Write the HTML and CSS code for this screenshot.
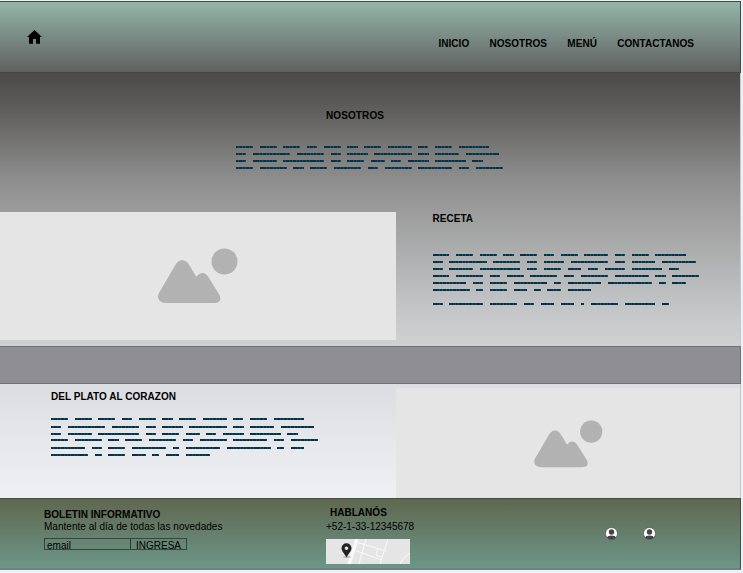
FILE: index.html
```html
<!DOCTYPE html>
<html lang="es">
<head>
<meta charset="utf-8">
<title>Nosotros</title>
<link rel="stylesheet" href="styles.css">
</head>
<body>
<div class="page">
  <header class="header">
    <svg class="home" viewBox="0 0 15 14"><path d="M7.5 0 15 7H13V13.7H9V9H6V13.7H2V7H0Z"/></svg>
    <nav class="nav"><a>INICIO</a><a>NOSOTROS</a><a>MENÚ</a><a>CONTACTANOS</a></nav>
  </header>
  <main class="main">
    <section class="about">
      <h2 class="title">NOSOTROS</h2>
      <div class="copy" data-lines="4"></div>
    </section>
    <section class="recipe">
      <div class="photo photo-left">
        <svg class="picture" viewBox="0 0 80 56"><path d="M1 45 17 17.500C20.500 10.500 28 10.500 31.500 17.500L38.300 28.800C42 24 46.500 23.500 50 28.500L61.500 47Q65 55 56 55H8C1 54.500-1.500 50 1 45Z"/><circle cx="66.500" cy="13.500" r="13"/></svg>
      </div>
      <div class="recipe-text">
        <h2 class="title">RECETA</h2>
        <div class="copy" data-lines="7"></div>
      </div>
    </section>
    <div class="band"></div>
    <section class="heart">
      <div class="heart-text">
        <h2 class="title">DEL PLATO AL CORAZON</h2>
        <div class="copy copy-heart" data-lines="6"></div>
      </div>
      <div class="photo photo-right">
        <svg class="picture picture-small" viewBox="0 0 80 56"><path d="M1 45 17 17.500C20.500 10.500 28 10.500 31.500 17.500L38.300 28.800C42 24 46.500 23.500 50 28.500L61.500 47Q65 55 56 55H8C1 54.500-1.500 50 1 45Z"/><circle cx="66.500" cy="13.500" r="13"/></svg>
      </div>
    </section>
  </main>
  <footer class="footer">
    <div class="news">
      <h3 class="foot-title news-title">BOLETIN INFORMATIVO</h3>
      <p class="foot-line news-line">Mantente al día de todas las novedades</p>
      <div class="form"><span class="email">email</span><span class="submit">INGRESA</span></div>
    </div>
    <div class="contact">
      <h3 class="foot-title contact-title">HABLANÓS</h3>
      <p class="foot-line phone">+52-1-33-12345678</p>
      <svg class="map" viewBox="0 0 84 25">
        <rect width="84" height="25" fill="#e5e5e5"/>
        <g fill="none" stroke="#fafafa">
          <path d="M31 0 23 25" stroke-width="3.500"/>
          <path d="M40 0 33 25M62 0 54 25M28 11 56 21M30 3 60 12M52 9 50 16 56 18M84 14Q77 18 74 25"/>
        </g>
        <ellipse cx="21" cy="18" rx="4" ry="1" fill="#bbb"/>
        <path fill="#222" fill-rule="evenodd" d="M20.500 4.200a5 5 0 0 1 5 5c0 3.200-3.600 6-5 9.300-1.400-3.300-5-6.100-5-9.300a5 5 0 0 1 5-5Zm0 3.200a1.800 1.800 0 1 0 .01 0Z"/>
      </svg>
    </div>
    <div class="social">
      <svg class="avatar" viewBox="0 0 13 13"><circle cx="6.500" cy="6.500" r="6" fill="#fff" stroke="#4c504a" stroke-width=".7"/><circle cx="6.500" cy="5" r="2.700" fill="#444"/><path fill="#444" d="M1.800 10.300Q3 8.500 6.500 8.500T11.200 10.300Q9.500 12.500 6.500 12.500T1.800 10.300Z"/></svg>
      <svg class="avatar" viewBox="0 0 13 13"><circle cx="6.500" cy="6.500" r="6" fill="#fff" stroke="#4c504a" stroke-width=".7"/><circle cx="6.500" cy="5" r="2.700" fill="#444"/><path fill="#444" d="M1.800 10.300Q3 8.500 6.500 8.500T11.200 10.300Q9.500 12.500 6.500 12.500T1.800 10.300Z"/></svg>
    </div>
  </footer>
</div>
<script src="copy.js"></script>
</body>
</html>
```
FILE: styles.css
```css
* { box-sizing: border-box; }
body {
  margin: 0;
  background: #eef0f7;
  font-family: "Liberation Sans", Arial, sans-serif;
  color: #000;
}
h2, h3, p { margin: 0; }
svg { display: block; }
.page {
  width: 741px;
  height: 573px;
  padding-top: 1px;
  overflow: hidden;
}
.header {
  height: 72px;
  display: flex;
  justify-content: space-between;
  padding: 0 46px 0 27px;
  border: solid #434845;
  border-width: 1px 1px 1px 0;
  background: linear-gradient(#93b5a8, #606060);
}
.home { width: 15px; height: 14px; margin-top: 28px; }
.nav {
  display: flex;
  gap: 20.300px;
  margin-top: 36px;
  font-size: 10px;
  line-height: 12px;
  font-weight: bold;
  letter-spacing: .04px;
}
.main {
  height: 425px;
  background: linear-gradient(#4c4a48 0, #5d5c5a 8%, #8b8b8b 24%, #9b9b9b 32%, #b5b6b7 47%, #c8c9cb 58%, #ced0d1 64%, #dcdde0 73%, #e5e7ea 86%, #eef0f4 100%);
  border-right: 1px solid #c4c7ce;
}
.title {
  font-size: 10px;
  line-height: 12px;
  letter-spacing: .03px;
}
.about { height: 139px; padding: 37px 0 0 236px; }
.about .title { padding-left: 90px; letter-spacing: .1px; }
.about .copy { padding-top: 24px; }
.row {
  display: flex;
  gap: 6.76px;
  height: 2px;
  margin-bottom: 5px;
}
.row-spaced { margin-top: 12px; }
.word {
  height: 2px;
  background: repeating-linear-gradient(90deg, #0b3046 0, #0b3046 2.5px, #08536a 2.5px, #08536a 3.38px);
}
.recipe { display: flex; height: 134px; }
.photo { background: #e5e5e5; flex: none; }
.photo-left { width: 396px; height: 128px; padding: 36px 0 0 157.500px; }
.picture { width: 80px; height: 56px; fill: #b2b2b2; }
.recipe-text { padding-left: 36.500px; }
.recipe .title { padding-top: 1px; height: 42px; }
.band {
  height: 38px;
  background: #8f8e93;
  border: 1px solid #717074;
  border-left: 0;
  margin-right: -1px;
}
.heart { display: flex; height: 114px; }
.heart-text { width: 396px; padding: 7px 0 0 51px; }
.heart .title { height: 27px; }
.copy-heart .row:nth-child(1) { margin-bottom: 6px; }
.copy-heart .row:nth-child(3) { margin-bottom: 4px; }
.copy-heart .row:nth-child(4) { margin-bottom: 6px; }
.photo-right { width: 344px; height: 110px; margin-top: 4px; padding: 32px 0 0 138px; }
.picture-small { width: 69px; height: 48px; }
.footer {
  height: 72px;
  display: flex;
  border: solid #434c44;
  border-width: 1px 1px 2px 0;
  background: linear-gradient(#5f674f, #6c9688);
  border-bottom-color: #73817c;
}
.news { width: 326px; padding: 10px 0 0 44px; }
.foot-title { font-size: 10px; line-height: 12px; letter-spacing: .02px; }
.foot-line { font-size: 10px; line-height: 12px; }
.news-line { letter-spacing: .03px; }
.form {
  display: flex;
  width: 143px;
  height: 12px;
  margin-top: 5px;
  border: 1px solid #34463d;
  font-size: 10px;
  line-height: 13px;
}
.email { width: 86px; padding-left: 2px; border-right: 1px solid #27372e; }
.submit { padding-left: 5px; }
.contact { width: 279px; padding-top: 8px; }
.contact-title { padding-left: 4px; }
.phone { margin-top: 2px; }
.map { width: 84px; height: 25px; margin-top: 6px; }
.social { display: flex; gap: 25px; padding-top: 28px; }
.avatar { width: 13px; height: 13px; }
```
FILE: copy.js
```js
// Word lengths, in characters, for each line of placeholder copy.
const lines = [
  [5, 5, 5, 3, 5, 3, 5, 7, 3, 5, 9],
  [3, 11, 8, 3, 6, 11, 3, 7, 10],
  [3, 7, 12, 3, 5, 4, 3, 6, 9, 3],
  [5, 8, 3, 5, 8, 3, 8, 10, 3, 8],
  [10, 3, 5, 10, 2, 10, 13, 2, 4],
  [11, 2, 5, 4, 2, 4, 7],
  [3, 10, 8, 3, 4, 4, 1, 8, 9, 2]
];
document.querySelectorAll('.copy').forEach(copy => {
  lines.slice(0, Number(copy.dataset.lines)).forEach((words, i) => {
    const row = document.createElement('div');
    row.className = i === 6 ? 'row row-spaced' : 'row';
    words.forEach(n => {
      const word = document.createElement('span');
      word.className = 'word';
      word.style.width = n * 3.38 + 'px';
      row.append(word);
    });
    copy.append(row);
  });
});
```
